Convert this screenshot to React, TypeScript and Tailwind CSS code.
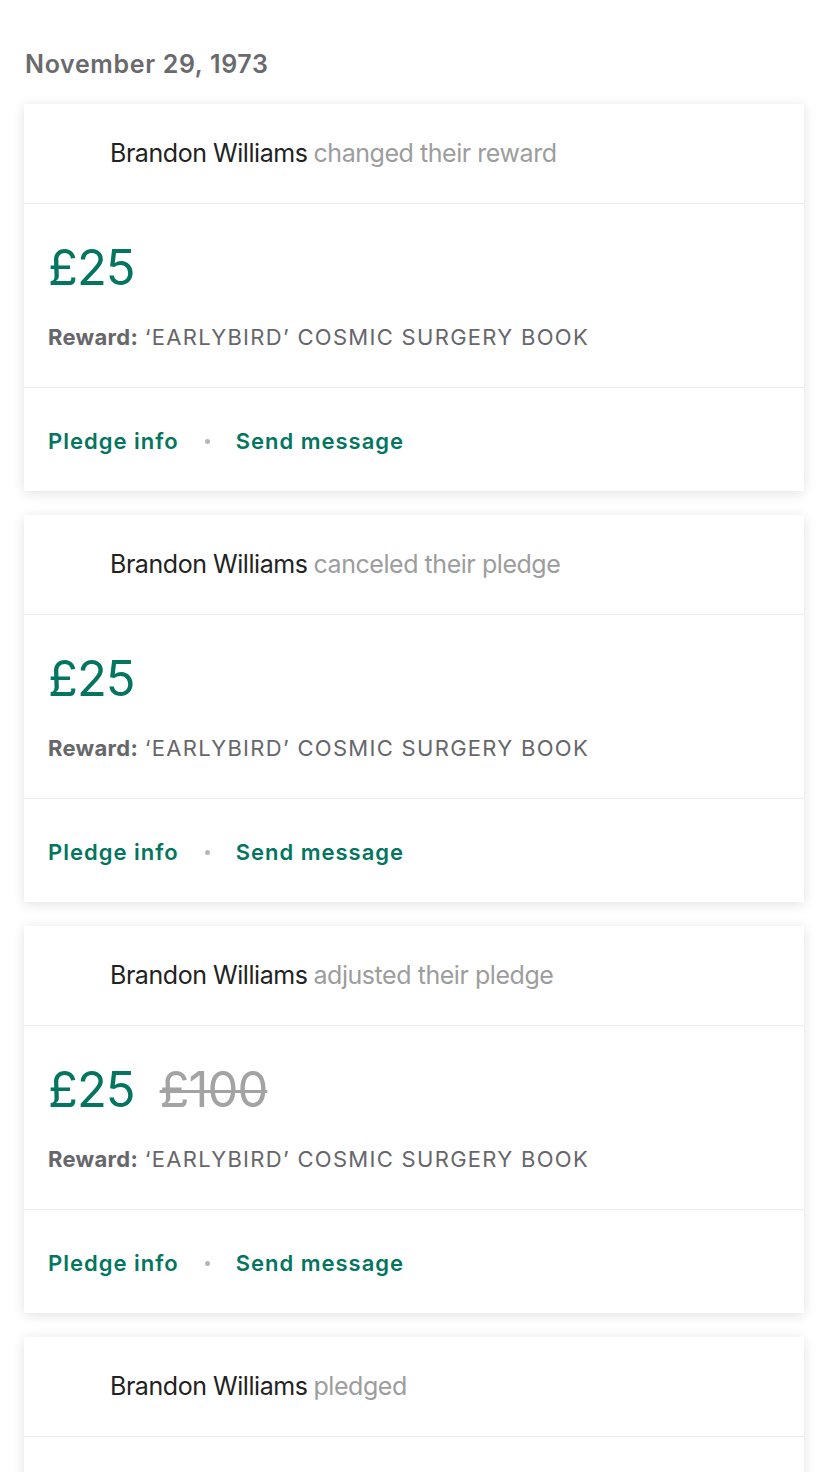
import React from "react";

type Item = { action: string; amount: string; old?: string; partial?: boolean };

const items: Item[] = [
  { action: "changed their reward", amount: "£25" },
  { action: "canceled their pledge", amount: "£25" },
  { action: "adjusted their pledge", amount: "£25", old: "£100" },
  { action: "pledged", amount: "£25", partial: true },
];

function Card({ item }: { item: Item }) {
  return (
    <div className="bg-white shadow-[0_2px_12px_rgba(0,0,0,0.12)]">
      <div className="h-[99px] flex items-center pl-[86px] pt-px text-[25px] tracking-[-0.45px]">
        <span className="text-[#222222]">Brandon Williams</span>
        <span className="text-[#9d9d9d] ml-[6px]">{item.action}</span>
      </div>
      <div className="h-px bg-[#ececf0]" />
      {item.partial ? (
        <div className="h-[120px]" />
      ) : (
        <>
          <div className="h-[183px] px-6 pt-[39px]">
            <div className="flex items-baseline gap-[25px] leading-none">
              <span className="text-[49px] text-[#04755f] tracking-[-1px]">{item.amount}</span>
              {item.old && (
                <span className="text-[49px] text-[#a3a3a3] tracking-[-1px] line-through decoration-[3px]">{item.old}</span>
              )}
            </div>
            <div className="mt-[29px] text-[22px] text-[#66666b] tracking-[0.3px]">
              <span className="font-bold">Reward:</span>{" "}
              <span className="tracking-[1.3px]">‘EARLYBIRD’ COSMIC SURGERY BOOK</span>
            </div>
          </div>
          <div className="h-px bg-[#ececf0]" />
          <div className="h-[103px] flex items-center px-6 pt-[4px] text-[22px] font-semibold text-[#04755f] tracking-[1px]">
            <span>Pledge info</span>
            <span className="mx-[26px] w-[5px] h-[5px] rounded-full bg-[#b5b5b5]" />
            <span>Send message</span>
          </div>
        </>
      )}
    </div>
  );
}

export default function App() {
  return (
    <div className="min-h-[1472px] bg-white px-6 pt-[46px] overflow-hidden" style={{ fontFamily: "Inter, 'Noto Sans', sans-serif" }}>
      <div className="text-[25px] font-semibold text-[#6a6a6e] pl-px leading-[36px] tracking-[0.65px]">November 29, 1973</div>
      <div className="mt-[22px] flex flex-col gap-6">
        {items.map((it, i) => (
          <Card key={i} item={it} />
        ))}
      </div>
    </div>
  );
}
